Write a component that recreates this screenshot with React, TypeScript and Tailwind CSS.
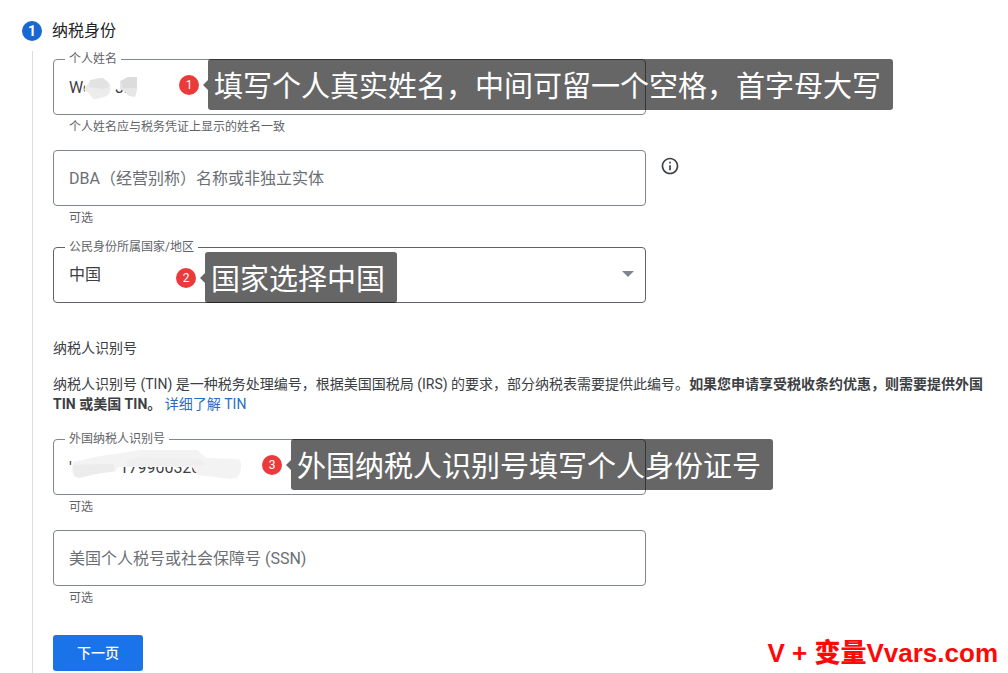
import type { ReactNode } from "react";

interface FieldProps {
  id: string;
  label: string;
  floating?: boolean;
  value?: string;
  hint: string;
  children?: ReactNode;
}

function Field({ id, label, floating = false, value, hint, children }: FieldProps) {
  return (
    <div className="relative w-full max-w-[593px]">
      <input
        id={id}
        type="text"
        defaultValue={value}
        placeholder={floating ? undefined : label}
        aria-label={floating ? undefined : label}
        aria-describedby={`${id}-hint`}
        className="block h-14 w-full rounded border border-[#80868b] bg-white px-[15px] text-base text-[#3c4043] outline-none placeholder:text-[#6b6f74] placeholder:opacity-100 focus:border-[#1a73e8]"
      />
      {floating && (
        <label
          htmlFor={id}
          className="absolute -top-2 left-3 bg-white px-1 text-xs leading-4 text-[#5f6368]"
        >
          {label}
        </label>
      )}
      <p id={`${id}-hint`} className="mt-1 px-4 text-xs leading-4 text-[#5f6368]">
        {hint}
      </p>
      {children}
    </div>
  );
}

interface CalloutProps {
  step: number;
  text: string;
  className: string;
}

// Numbered red dot with a dark speech box, floats over a field
function Callout({ step, text, className }: CalloutProps) {
  return (
    <div className={`pointer-events-none absolute z-10 flex items-center ${className}`}>
      <span className="flex size-5 items-center justify-center rounded-full bg-[#ea3a3a] text-xs leading-none text-white">
        {step}
      </span>
      <svg width="5" height="10" viewBox="0 0 5 10" className="ml-1 shrink-0" aria-hidden="true">
        <path d="M5 0v10L0 5z" fill="#666" />
      </svg>
      <span className="flex h-[51px] items-center whitespace-nowrap rounded-[3px] bg-black/60 pl-1.5 pr-3 pt-1.5 text-[29px] leading-none text-white">
        {text}
      </span>
    </div>
  );
}

export default function App() {
  return (
    <main className="relative flex min-h-screen flex-col bg-white pt-[21px] font-[Roboto,'Noto_Sans_CJK_SC',sans-serif] text-[#3c4043]">
      <header className="flex h-5 items-center gap-2.5 pl-[22px]">
        <span className="flex size-5 items-center justify-center rounded-full bg-[#1967d2] text-sm font-bold leading-none text-white">
          1
        </span>
        <h1 className="text-base leading-5 text-[#202124]">纳税身份</h1>
      </header>

      <form className="ml-8 mt-2.5 flex-1 border-l border-[#dadce0] pb-0.5 pl-5 pr-2 pt-2">
        <Field
          id="name"
          label="个人姓名"
          floating
          value="We      Ji"
          hint="个人姓名应与税务凭证上显示的姓名一致"
        >
          <svg
            width="56"
            height="24"
            viewBox="0 0 56 24"
            className="pointer-events-none absolute left-7 top-4"
            aria-hidden="true"
          >
            <path d="M34 0h8v11h-8z" fill="#fff" />
            <path d="M4 6h10v14H4z" fill="#fff" />
            <path d="M4 12q6-8 14-9 8 1 11 6 2 7-2 11-7 4-15 4l-4-6-5-3z" fill="#ececec" />
            <path d="M9 5l13-2q5 3 6 9l-6 2-14-2z" fill="#e2e2e2" />
            <path d="M39 6l8-4h9v13l-2 7-6-1-4-4-5-3z" fill="#e6e6e6" />
            <path d="M40 6l7-4h9v11H42z" fill="#dcdcdc" />
          </svg>
          <Callout step={1} text="填写个人真实姓名，中间可留一个空格，首字母大写" className="left-[126px] top-0" />
        </Field>

        <div className="mt-[15px] flex items-start gap-3.5">
          <Field id="dba" label="DBA（经营别称）名称或非独立实体" hint="可选" />
          <button type="button" aria-label="DBA 说明" className="mt-1.5 shrink-0">
            <svg width="20" height="20" viewBox="0 0 24 24" fill="#3c4043" aria-hidden="true">
              <path d="M11 7h2v2h-2zm0 4h2v6h-2zm1-9C6.48 2 2 6.48 2 12s4.480 10 10 10 10-4.480 10-10S17.520 2 12 2zm0 18c-4.410 0-8-3.590-8-8s3.590-8 8-8 8 3.590 8 8-3.590 8-8 8z" />
            </svg>
          </button>
        </div>

        <div className="relative mt-[21px] w-full max-w-[593px]">
          <select
            id="country"
            defaultValue="CN"
            className="block h-14 w-full appearance-none rounded border border-[#5f6368] bg-white px-[15px] text-base text-[#3c4043] outline-none"
          >
            <option value="CN">中国</option>
          </select>
          <label
            htmlFor="country"
            className="absolute -top-2 left-3 bg-white px-1 text-xs leading-4 text-[#5f6368]"
          >
            公民身份所属国家/地区
          </label>
          <svg
            width="12"
            height="6"
            viewBox="0 0 12 6"
            className="pointer-events-none absolute right-3 top-6"
            aria-hidden="true"
          >
            <path d="M0 0h12L6 6z" fill="#80868b" />
          </svg>
          <Callout step={2} text="国家选择中国" className="left-[123px] top-[5px]" />
        </div>

        <h2 className="mt-[35px] text-sm leading-5">纳税人识别号</h2>
        <p className="mt-4 text-sm leading-5">
          纳税人识别号 (TIN) 是一种税务处理编号，根据美国国税局 (IRS) 的要求，部分纳税表需要提供此编号。
          <b>如果您申请享受税收条约优惠，则需要提供外国 TIN 或美国 TIN。</b>{" "}
          <a href="#tin" className="text-[#2a6dc0]">
            详细了解 TIN
          </a>
        </p>

        <div className="mt-[25px]">
          <Field
            id="foreign-tin"
            label="外国纳税人识别号"
            floating
            value="'            179900320"
            hint="可选"
          >
            <svg
              width="174"
              height="32"
              viewBox="0 0 174 32"
              className="pointer-events-none absolute left-4 top-2.5"
              aria-hidden="true"
            >
              <path d="M0 16h20v8H0z" fill="#fff" />
              <path
                d="M4 13l27-6 22-3 18-3h57l9 8 32 1q4 1 3 9t-5 10l-6 1-32-4-6-8H50l-5 5L26 25 10 29l-5-2q-3-6-1-14z"
                fill="#f3f3f3"
              />
              <path d="M4 16l27-1h14v7L26 25 10 29l-5-2z" fill="#ececec" />
              <path d="M58 11l14-3 58 2 7 6-10 1-69 1z" fill="#efefef" />
            </svg>
            <Callout step={3} text="外国纳税人识别号填写个人身份证号" className="left-[209px] top-0" />
          </Field>
        </div>

        <div className="mt-[15px]">
          <Field id="ssn" label="美国个人税号或社会保障号 (SSN)" hint="可选" />
        </div>

        <button
          type="submit"
          className="mt-[29px] block h-9 rounded-[3px] bg-[#1a73e8] px-6 text-sm font-medium text-white"
        >
          下一页
        </button>
      </form>

      <p className="absolute bottom-1 right-2.5 font-['Liberation_Sans','Noto_Sans_CJK_SC',sans-serif] text-[26px] font-black leading-8 text-[#fb0a0a]">
        V + 变量Vvars.com
      </p>
    </main>
  );
}
